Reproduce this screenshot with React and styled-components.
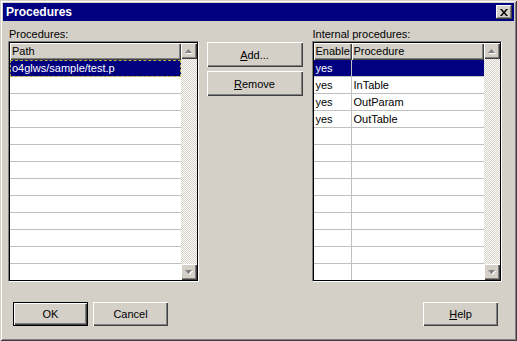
import styled, { createGlobalStyle } from "styled-components";

const GlobalStyle = createGlobalStyle`
  html, body {
    margin: 0;
    padding: 0;
    background: #d4d0c8;
  }
  body {
    font-family: "Liberation Sans", Arial, sans-serif;
    font-size: 11px;
    color: #000;
  }
`;

const Window = styled.div`
  box-sizing: border-box;
  width: 517px;
  height: 341px;
  padding: 3px;
  background: #d4d0c8;
  box-shadow: inset 1px 1px #d4d0c8, inset -1px -1px #404040,
    inset 2px 2px #fff, inset -2px -2px #808080;
  display: flex;
  flex-direction: column;
`;

const TitleBar = styled.div`
  height: 18px;
  display: flex;
  align-items: center;
  justify-content: space-between;
  padding: 0 2px 0 3px;
  background: #000080;
  color: #fff;
  font-weight: bold;
  font-size: 12px;
`;

const CloseButton = styled.div`
  width: 16px;
  height: 14px;
  display: flex;
  align-items: center;
  justify-content: center;
  background: #d4d0c8;
  box-shadow: inset -1px -1px #404040, inset 1px 1px #fff,
    inset -2px -2px #808080;
`;

const Body = styled.div`
  flex: 1;
  display: flex;
  flex-direction: column;
  padding: 6px 12px 0 5px;
`;

const Main = styled.div`
  display: flex;
  align-items: flex-start;
`;

const Panel = styled.div`
  width: 191px;
  display: flex;
  flex-direction: column;
  margin-left: ${(p) => p.$offset || 0}px;
`;

const Label = styled.div`
  height: 14px;
  line-height: 14px;
  padding-left: 1px;
`;

const ListBox = styled.div`
  box-sizing: border-box;
  height: 241px;
  border: 1px solid;
  border-color: #808080 #fff #fff #808080;
  box-shadow: inset 1px 1px #000, inset -1px -1px #000;
  padding: 1px;
  display: flex;
  background: #fff;
`;

const Table = styled.div`
  flex: 1;
  overflow: hidden;
  display: grid;
  grid-template-columns: ${(p) => p.$cols};
  grid-auto-rows: 17px;
  align-content: start;
`;

const HeaderCell = styled.div`
  box-sizing: border-box;
  background: #d4d0c8;
  padding: 0 2px;
  line-height: 17px;
  white-space: nowrap;
  overflow: hidden;
  box-shadow: inset 1px 1px #fff, inset -1px -1px #404040,
    inset -2px -2px #808080;
`;

const Cell = styled.div`
  box-sizing: border-box;
  padding: 0 2px;
  line-height: 16px;
  white-space: nowrap;
  border-bottom: 1px solid #c0c0c0;
  border-right: ${(p) => (p.$divider ? "1px solid #c0c0c0" : "none")};
  background: ${(p) => (p.$selected ? "#000080" : "#fff")};
  color: ${(p) => (p.$selected ? "#fff" : "#000")};
  outline: ${(p) => (p.$focus ? "1px dashed #b8b040" : "none")};
  outline-offset: -1px;
`;

const ScrollBar = styled.div`
  width: 16px;
  display: flex;
  flex-direction: column;
  background: repeating-conic-gradient(#fff 0 25%, #d4d0c8 0 50%) 0 0 / 2px
    2px;
`;

const ScrollTrack = styled.div`
  flex: 1;
`;

const ArrowButton = styled.div`
  width: 16px;
  height: 16px;
  display: flex;
  align-items: center;
  justify-content: center;
  background: #d4d0c8;
  box-shadow: inset 1px 1px #fff, inset -1px -1px #404040,
    inset -2px -2px #808080;
`;

const ButtonColumn = styled.div`
  width: 96px;
  margin: 15px 0 0 8px;
  display: flex;
  flex-direction: column;
  gap: 4px;
`;

const Button = styled.button`
  box-sizing: border-box;
  width: ${(p) => p.$width || 75}px;
  height: ${(p) => p.$height || 24}px;
  padding: 0;
  font-family: "Liberation Sans", Arial, sans-serif;
  font-size: 11px;
  color: #000;
  background: #d4d0c8;
  border: ${(p) => (p.$default ? "1px solid #000" : "none")};
  box-shadow: inset 1px 1px #fff, inset -1px -1px #404040,
    inset -2px -2px #808080;
  margin-left: ${(p) => (p.$push ? "auto" : "0")};
`;

const Footer = styled.div`
  display: flex;
  align-items: center;
  gap: 5px;
  margin-top: 20px;
  padding: 0 4px 0 5px;
`;

const Mnemonic = styled.span`
  text-decoration: underline;
`;

const Arrow = ({ down }) => (
  <svg width="8" height="5" viewBox="0 0 8 5">
    {down ? (
      <>
        <polygon points="1,1 8,1 4.5,5" fill="#fff" />
        <polygon points="0,0 7,0 3.5,4" fill="#808080" />
      </>
    ) : (
      <>
        <polygon points="4.5,1 8,5 1,5" fill="#fff" />
        <polygon points="3.5,0 7,4 0,4" fill="#808080" />
      </>
    )}
  </svg>
);

const VScroll = () => (
  <ScrollBar>
    <ArrowButton>
      <Arrow />
    </ArrowButton>
    <ScrollTrack />
    <ArrowButton>
      <Arrow down />
    </ArrowButton>
  </ScrollBar>
);

const ROWS = 13;

const procedures = [
  { enable: "yes", name: "" },
  { enable: "yes", name: "InTable" },
  { enable: "yes", name: "OutParam" },
  { enable: "yes", name: "OutTable" },
];

export default function App() {
  const emptyLeft = Array.from({ length: ROWS - 1 });
  const emptyRight = Array.from({ length: ROWS - procedures.length });

  return (
    <>
      <GlobalStyle />
      <Window>
        <TitleBar>
          <span>Procedures</span>
          <CloseButton>
            <svg width="8" height="7" viewBox="0 0 8 7">
              <path
                d="M0 0h2l2 2.5L6 0h2L5 3.5 8 7H6L4 4.5 2 7H0l3-3.5z"
                fill="#000"
              />
            </svg>
          </CloseButton>
        </TitleBar>
        <Body>
          <Main>
            <Panel>
              <Label>Procedures:</Label>
              <ListBox>
                <Table $cols="1fr">
                  <HeaderCell>Path</HeaderCell>
                  <Cell $selected $focus>
                    o4glws/sample/test.p
                  </Cell>
                  {emptyLeft.map((_, i) => (
                    <Cell key={i} />
                  ))}
                </Table>
                <VScroll />
              </ListBox>
            </Panel>
            <ButtonColumn>
              <Button $width={96} $height={25}>
                <Mnemonic>A</Mnemonic>dd...
              </Button>
              <Button $width={96} $height={25}>
                <Mnemonic>R</Mnemonic>emove
              </Button>
            </ButtonColumn>
            <Panel $offset={9}>
              <Label>Internal procedures:</Label>
              <ListBox>
                <Table $cols="38px 1fr">
                  <HeaderCell>Enable</HeaderCell>
                  <HeaderCell>Procedure</HeaderCell>
                  {procedures.map((p, i) => [
                    <Cell key={`e${i}`} $divider $selected={i === 0}>
                      {p.enable}
                    </Cell>,
                    <Cell key={`n${i}`} $selected={i === 0}>
                      {p.name}
                    </Cell>,
                  ])}
                  {emptyRight.map((_, i) => [
                    <Cell key={`ee${i}`} $divider />,
                    <Cell key={`en${i}`} />,
                  ])}
                </Table>
                <VScroll />
              </ListBox>
            </Panel>
          </Main>
          <Footer>
            <Button $default>OK</Button>
            <Button>Cancel</Button>
            <Button $push>
              <Mnemonic>H</Mnemonic>elp
            </Button>
          </Footer>
        </Body>
      </Window>
    </>
  );
}
